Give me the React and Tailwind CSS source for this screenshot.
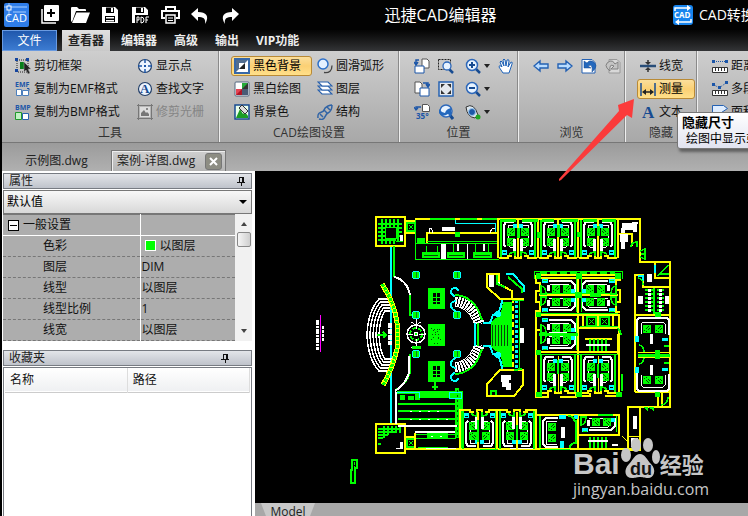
import React from "react";

const BLUE = "#1c56a8";

function Icon({ children, size = 16 }) {
  return (
    <svg width={size} height={size} viewBox="0 0 16 16" fill="none" className="shrink-0" aria-hidden="true">
      {children}
    </svg>
  );
}

/* ---------- quick access icons, 20 x 20, white ---------- */
const quick = [
  ["新建", <g key="n"><path d="M5 1h13v14H5z" fill="#fff" stroke="#fff" strokeWidth="2" strokeLinejoin="round" /><path d="M11 4v8M7 8h8" stroke="#000" strokeWidth="2" /><path d="M2 4v14h14" stroke="#fff" strokeWidth="1.5" /></g>],
  ["打开", <g key="o" fill="#fff"><path d="M1 16V3q0-1 1-1h5l2 2h6q1 0 1 1v1H6L2 17z" /><path d="M6.500 7.500H20L16 18H2z" /></g>],
  ["保存", <g key="s"><path d="M2 2h13l3 3v13H2z" fill="#fff" /><path d="M6 2.500h8V8H6zM5 11h10v6H5z" fill="#000" /><path d="M11 3h2v4h-2zM6 12h8v1.500H6zM6 15h8v1.500H6z" fill="#fff" /></g>],
  ["保存为PDF", <g key="p"><path d="M2 2h13l3 3v5H2zM2 10h3v8H2z" fill="#fff" /><path d="M6 2.500h8V8H6z" fill="#000" /><path d="M11 3h2v4h-2z" fill="#fff" /><path d="M7 18v-6h2v3H7M11 18v-6q3 0 3 3t-3 3M16 18v-6h3M16 15h2" stroke="#fff" /></g>],
  ["打印", <g key="r"><path d="M6 6V2h9v4M5 13H2V6h17v7h-3" stroke="#fff" strokeWidth="2" /><path d="M6 10h9v8H6z" stroke="#fff" strokeWidth="1.500" /><path d="M8 13h5M8 15.500h5" stroke="#fff" /></g>],
  ["撤销", <path key="u" d="M1 9l7-6v4c8 0 12 4 7 12 1-6-2-7-7-7v4z" fill="#fff" />],
  ["重做", <path key="d" d="M19 9l-7-6v4C4 7 0 11 5 19c-1-6 2-7 7-7v4z" fill="#fff" />],
];

function AppLogo() {
  return (
    <svg width="25" height="24" viewBox="0 0 25 24" className="shrink-0" aria-label="CAD">
      <rect width="25" height="24" rx="2" fill="#2f7de8" />
      <path d="M0 4h23M5 0v14M9 9h13" stroke="#a9d0ff" />
      <rect x="3" y="3" width="4" height="4" fill="#2f7de8" stroke="#fff" />
      <text x="1" y="19" fontSize="11" fontFamily="Open Sans, sans-serif" fill="#fff">CAD</text>
    </svg>
  );
}

function ConverterLogo() {
  return (
    <svg width="20" height="20" viewBox="0 0 20 20" className="shrink-0" aria-hidden="true">
      <rect width="20" height="20" rx="3" fill="#1684ee" />
      <path d="M2 6V3h14M18 14v3H4" stroke="#fff" fill="none" strokeWidth="1.500" />
      <path d="M14 0l4 3-4 3zM6 14l-4 3 4 3z" fill="#fff" />
      <text x="1" y="13" fontSize="8" fontWeight="bold" fontFamily="Open Sans, sans-serif" fill="#fff">CAD</text>
    </svg>
  );
}

/* ---------- ribbon icons ---------- */
const magnifier = (
  <g>
    <path d="M10 10l5 5" stroke="#174b91" strokeWidth="2.500" />
    <circle cx="7" cy="7" r="5.500" fill="#e8f3ff" stroke="#2d68ba" strokeWidth="1.500" />
  </g>
);
const pages = (
  <g>
    <path d="M8 1h5l2 2v7H8z" fill="#fff" stroke="#555" />
    <path d="M1 8h9v7H1z" fill="#fff" stroke={BLUE} />
    <path d="M5 2H2v4M0 4l2 3 2-3" stroke={BLUE} strokeWidth="1.500" />
  </g>
);
const ruler = (
  <g>
    <path d="M.5 9.500h15v5H.5z" fill="#fff" stroke="#333" />
    <path d="M3.500 10v3M6.500 10v3M9.500 10v3M12.500 10v3" stroke="#333" />
  </g>
);
const icons = {
  crop: <Icon><path d="M2 2h11v12H2z" stroke="#222" strokeDasharray="1 1" /><path d="M0 0h3v3H0zM11 0h3v3h-3zM0 11h3v3H0z" fill="#1546a0" /><path d="M5 4h4v7H5z" fill="#087f1b" /><path d="M9 4v10l2-2 2 4 2-1-2-4h3z" fill="#222" stroke="#aaa" strokeWidth=".5" /></Icon>,
  emf: <Icon><text x="0" y="6" fontSize="7" fontWeight="bold" fontFamily="Open Sans, sans-serif" fill={BLUE}>EMF</text><path d="M1.500 8.500h5v6h-5zM7.500 9.500h6v5h-6z" fill="#fff" stroke="#4b7fbd" /><path d="M12 7.500h2v2" stroke={BLUE} /></Icon>,
  bmp: <Icon><text x="0" y="6" fontSize="7" fontWeight="bold" fontFamily="Open Sans, sans-serif" fill={BLUE}>BMP</text><path d="M.5 8.500h6v7h-6z" fill="#c1f2c3" stroke="#21982c" /><path d="M7.500 9.500h6v6h-6z" fill="#fff" stroke="#2862ae" /></Icon>,
  point: <Icon><circle cx="8" cy="8" r="6.500" fill="#edf5ff" stroke="#233f68" strokeWidth="1.200" /><path d="M8 1v4M8 11v4M1 8h4M11 8h4" stroke={BLUE} strokeWidth="1.500" /><path d="M7 7h2v2H7z" fill={BLUE} /></Icon>,
  findText: <Icon><circle cx="8" cy="8" r="6.500" fill="#edf5ff" stroke="#233f68" strokeWidth="1.200" /><text x="3" y="12" fontSize="13" fontWeight="bold" fontFamily="Liberation Serif, serif" fill="#174b91">A</text></Icon>,
  raster: <Icon><path d="M1.500 0v16M14.500 0v16M0 1.500h16M0 14.500h16" stroke="#777" /><path d="M3 3h10v10H3z" fill="#ddd" /><path d="M4 12V9l3-3 2 3 1-1 2 2v2z" fill="#777" /><path d="M9 4h2v2H9z" fill="#888" /></Icon>,
  black: <Icon><rect x="1" y="1" width="14" height="14" fill="#fff" stroke="#3768a8" strokeWidth="2" /><path d="M2 2h12L2 14z" fill="#526d8f" /><path d="M5 5h6L5 11z" fill="#fff" /><path d="M11 5v6H5z" fill="#222" /></Icon>,
  mono: <Icon><rect x="1" y="1" width="14" height="14" rx="1" fill="#fff" stroke="#53677f" /><path d="M2 8h6v6H2z" fill="#e54452" /><path d="M8 2h6v6H8z" fill="#333" /><path d="M8 8V2h6z" fill="#25aa38" /><path d="M2 14l6-6v6z" fill="#b01626" /><path d="M8 8h6v6H8z" fill="#4a5b75" /></Icon>,
  color: <Icon><path d="M1 1h14v14H1z" fill="#eaffea" stroke="#174b91" strokeWidth="1.500" /><path d="M2 14l4-9 3 5 2-2 3 4v2z" fill="#1b9d25" /><path d="M5 4l3-3 6 6-3 3z" fill="#ddd" stroke="#333" /></Icon>,
  arc: <Icon><circle cx="6" cy="6" r="5" fill="#e4f0ff" stroke="#2d70c9" strokeWidth="1.500" /><path d="M7 14.500q8 1 8-7" stroke="#444" strokeWidth="1.300" /></Icon>,
  layers: <Icon>{[9, 5, 1].map((y) => <path key={y} d={`M1 ${y}h10l4 4H5z`} fill="#fff" stroke="#2860ac" strokeWidth="1.200" />)}</Icon>,
  dna: <Icon><path d="M1 14C0 6 6 10 7 6s7-5 8-5M2 15c7 2 5-4 9-6s4-5 4-8M3 10l3 3M7 6l4 4M10 3l3 3" stroke="#3164a6" strokeWidth="1.500" /></Icon>,
  pages: <Icon>{pages}</Icon>,
  pagesNext: <Icon><path d="M1 1h5l2 2v9H1z" fill="#fff" stroke="#555" /><path d="M6 7h9v8H6z" fill="#fff" stroke={BLUE} /><path d="M9 2h5v3M12 3l2 3 2-3" stroke={BLUE} strokeWidth="1.500" /></Icon>,
  rotate: <Icon><path d="M8.500.5h5l2 2v5h-7z" fill="#fff" stroke="#555" /><path d="M7 3H2v3M0 3l2 3 2-2" stroke={BLUE} strokeWidth="1.300" /><text x="2" y="15" fontSize="8" fontWeight="bold" fontFamily="Open Sans, sans-serif" fill={BLUE}>35°</text></Icon>,
  region: <Icon><path d="M.5 1.500h12v10H.5z" stroke="#222" strokeDasharray="2 1" /><path d="M11 11l4 4" stroke="#174b91" strokeWidth="2.500" /><circle cx="9" cy="8" r="4" fill="#e8f3ff" stroke="#2d68ba" strokeWidth="1.300" /></Icon>,
  fit: <Icon><path d="M1 1h14v14H1z" fill="#e4e8ed" stroke="#2763b2" strokeWidth="1.500" /><path d="M3 3h4L3 7zM13 3v4L9 3zM13 13H9l4-4zM3 13V9l4 4z" fill="#333" /></Icon>,
  previous: <Icon><path d="M11 10l4 5" stroke="#174b91" strokeWidth="3" /><circle cx="8" cy="7" r="6" fill="#e8f3ff" stroke="#2d68ba" strokeWidth="1.500" /><path d="M7 9q1-4 6-5v9l-3-3q-6 4-9-1V5l3 3z" fill="#2468bd" /></Icon>,
  zoomIn: <Icon>{magnifier}<path d="M7 4v6M4 7h6" stroke="#174b91" strokeWidth="2" /></Icon>,
  zoomOut: <Icon>{magnifier}<path d="M4 7h6" stroke="#174b91" strokeWidth="2" /></Icon>,
  orbit: <Icon><path d="M1 3q8-5 12 8l-3 3Q2 13 1 3z" fill="#dce6ed" stroke="#333" /><circle cx="7" cy="8" r="3.500" fill="#1b58a7" stroke="#9cc7ed" /><circle cx="13" cy="13" r="2.500" fill="#20a622" /></Icon>,
  hand: <Icon><path d="M5 15L1 9q0-2 2-1l1 1-2-5q1-2 2 0l2 4-1-6q1-2 2 0l1 6 1-6q2-1 2 1l-1 6 3-5q2 0 1 2l-3 9z" fill="#fff" stroke="#1e62b8" /></Icon>,
  left: <Icon><path d="M1 8l6-5v3h8v4H7v3z" fill="#b9dcff" stroke="#2461b3" strokeWidth="1.400" /></Icon>,
  right: <Icon><path d="M15 8L9 3v3H1v4h8v3z" fill="#b9dcff" stroke="#2461b3" strokeWidth="1.400" /></Icon>,
  back: <Icon><path d="M1 1.500h10l3 3V15H1z" fill="#fff" stroke="#2461b3" /><path d="M3 3v7h7L7 8q5-3 4 6 8-7 0-11-3-1-5 2z" fill="#2468bd" stroke="#174b91" strokeWidth=".5" /></Icon>,
  forward: <Icon><path d="M4 1.500h8l3 3V15H4z" fill="#d8d8d8" stroke="#999" /><path d="M13 4v7H6l3-3q-5-3-4 5-8-6 0-10 3-1 5 3z" fill="#c4c4c4" stroke="#808080" /></Icon>,
  lineWidth: <Icon><path d="M0 8h16" stroke="#294e79" strokeWidth="2.500" /><path d="M8 2v2M8 14v-2" stroke="#333" strokeWidth="1.500" /><path d="M5 4h6L8 7zM5 12h6L8 9z" fill="#333" /></Icon>,
  measure: <Icon><path d="M1 2v13M15 2v13" stroke="#174b91" strokeWidth="1.500" /><path d="M4 11h8" stroke="#222" strokeWidth="1.500" /><path d="M2 11l4-3v6zM14 11l-4-3v6z" fill="#222" /></Icon>,
  text: <Icon><text x="2" y="14" fontSize="17" fontWeight="bold" fontFamily="Liberation Serif, serif" fill="#174b91">A</text></Icon>,
  distance: <Icon>{ruler}<path d="M2 3.500h12" stroke={BLUE} strokeDasharray="1 1" /><path d="M0 2h3v3H0zM13 2h3v3h-3z" fill={BLUE} /></Icon>,
  polyline: <Icon>{ruler}<path d="M1 3l6 4 7-5" stroke={BLUE} strokeDasharray="1 1" /><path d="M0 2h3v3H0zM6 5h3v3H6zM13 0h3v3h-3z" fill={BLUE} /></Icon>,
  area: <Icon><path d="M.5 1.500h11l4 3-6 4h-9z" fill="#dfedff" stroke="#2461b3" />{ruler}</Icon>,
};

/* ---------- ribbon pieces ---------- */
function Tool({ icon, label, active, disabled, menu }) {
  return (
    <div className="flex h-[23px] items-center">
      <button
        type="button"
        disabled={disabled}
        aria-label={label || icon}
        className={
          "flex h-5 grow items-center gap-[3px] whitespace-nowrap rounded-[3px] border px-[2px] text-xs leading-4 " +
          (active
            ? "border-[#b98a35] bg-gradient-to-b from-[#fbdf9c] via-[#fbd074] to-[#ffe08a] text-black"
            : disabled
              ? "border-transparent text-[#858585]"
              : "border-transparent text-[#111]")
        }
      >
        {icons[icon]}
        {label}
        {menu && <span className="border-x-[3px] border-t-[4px] border-x-transparent border-t-[#222]" />}
      </button>
    </div>
  );
}

function Group({ title, width, children }) {
  return (
    <section className={"flex shrink-0 flex-col border-r border-[#eee] " + width}>
      <div className="flex h-[73px] border-r border-[#8a8a8a] pt-[3px]">{children}</div>
      <h2 className="grow border-r border-[#8a8a8a] text-center text-xs leading-[18px] text-[#333]">{title}</h2>
    </section>
  );
}

/* ---------- drawing ---------- */
const G = "#00ff00";
const Y = "#ffff00";
const C = "#00ffff";

function Pillow({ x, y }) {
  return (
    <g>
      <rect x={x} y={y} width="8" height="8" fill={G} />
      <path d={`M${x + 1} ${y + 6}l5-5M${x + 3} ${y + 7}l4-4`} stroke="#043b04" strokeDasharray="2 1" />
    </g>
  );
}

function Room({ x, y, flip, up }) {
  const t = `translate(${flip ? x + 19 : x} ${up ? y + 39 : y}) scale(${flip ? -1 : 1} ${up ? -1 : 1})`;
  return (
    <g transform={t}>
      <path d="M2 0v38" stroke={G} strokeWidth="2" />
      <path d="M15 3H7L5 6v20l2 2" stroke="#fff" strokeWidth="2" />
      <path d="M14 6H9v20l2 2h3" stroke="#fff" />
      <Pillow x={8} y={9} />
      <Pillow x={8} y={19} />
      <path d="M14 5h4v4h-4zM3 31h5v5H3z" fill={C} />
      <path d="M14 20h3v12h-3z" fill="#fff" />
      <path d="M4 33h3" stroke="#000" />
      <path d="M10 38q0-5 6-5v5" stroke={G} strokeWidth="1.500" />
      <path d="M0 39h9v-2h4M16 37v2h3" stroke={Y} strokeWidth="2" />
    </g>
  );
}

function WideRoom({ x, y, flip, up, w = 38 }) {
  const t = `translate(${flip ? x + w : x} ${up ? y + 17 : y}) scale(${flip ? -1 : 1} ${up ? -1 : 1})`;
  return (
    <g transform={t}>
      <path d={`M9 3h${w - 16}l4 4v8`} stroke="#fff" strokeWidth="2" />
      <path d={`M9 15h${w - 20}l3-2V8l-2-2H10`} stroke="#fff" />
      <Pillow x={12} y={7} />
      <Pillow x={23} y={7} />
      <path d={`M2 1h6v4H2zM${w - 7} 11h4v4h-4z`} fill={C} />
      <path d="M7 7h3v6H7z" fill="#fff" />
      <path d="M1 8q5 1 5 8H1z" stroke={G} strokeWidth="1.500" />
      <path d={`M${w - 2} 1v16M3 2h4`} stroke={G} />
    </g>
  );
}

function Shaft({ x, y, s = 10 }) {
  return (
    <g stroke={G}>
      <rect x={x} y={y} width={s} height={s} strokeWidth="2" />
      <path d={`M${x + 2} ${y + 2}l${s - 4} ${s - 4}M${x + s - 2} ${y + 2}l${4 - s} ${s - 4}`} />
    </g>
  );
}

function CurvedStair({ up }) {
  return (
    <g transform={up ? "translate(0 669) scale(1 -1)" : undefined}>
      <path d="M455 301q18 2 25 23" stroke="#fff" strokeWidth="9" strokeDasharray="2 1" />
      <path d="M455 306q14 2 20 19" stroke="#fff" />
      <path d="M455 295q20 1 27 25M478 323v12" stroke={G} strokeWidth="2" />
      <path d="M475 323v12M455 296q-4-1-4-4t3-4q4 0 4 3M456 311q-4-1-5-5t5-5" stroke={C} strokeWidth="2" />
      <path d="M483 323h7l3-8q8-1 9-15" stroke={C} strokeWidth="2" />
      <path d="M493 320q9-4 10-18h9v33h-21v-13z" fill={G} />
      <circle cx="498" cy="314" r="3" fill={C} />
    </g>
  );
}

function Plaza() {
  return (
    <g>
      <path d="M391 247v176" stroke={C} strokeWidth="2" />
      <path d="M394 246v31M410 295v20h4M410 354v18q-3 12-14 18" stroke={G} strokeWidth="2" />
      <path d="M394 277q13 3 16 18M409 356v17q-4 12-14 18" stroke="#fff" strokeWidth="2" />
      {[0, 3, 6, 9, 12].map((d) => (
        <path key={d} d={`M390 ${299 + d}H${379 + d / 2}Q${368 + d} ${311 + d / 2} ${367 + d} 335Q${368 + d} ${359 - d / 2} ${379 + d / 2} ${371 - d}h10`} stroke="#fff" strokeWidth="1.500" />
      ))}
      <path d="M382 284q13 20 15 39v26q-4 18-14 36" stroke={Y} strokeWidth="5" />
      <path d="M382 284q13 20 15 39v26q-4 18-14 36" stroke={G} strokeWidth="3" strokeDasharray="3 1" />
      <path d="M390 323v22" stroke="#fff" strokeWidth="4" strokeDasharray="5 1" />
      <path d="M377 335h9m-3-3l3 3-3 3" stroke={G} strokeWidth="2" />
      {[[416, 275], [457, 275], [457, 315], [416, 315], [416, 354], [457, 354]].map(([x, y]) => (
        <g key={`${x}-${y}`}>
          <circle cx={x} cy={y} r="4" fill={G} stroke={C} />
          <path d={`M${x} ${y - 3}v6`} stroke="#087a25" />
        </g>
      ))}
      <circle cx="416" cy="334" r="9" stroke="#fff" strokeWidth="1.500" />
      <circle cx="416" cy="334" r="6" stroke={G} strokeWidth="2" strokeDasharray="4 2" />
      <circle cx="416" cy="334" r="2" fill={G} stroke="#fff" />
      <path d="M416 319v10M416 339v9M407 334h6M419 334h6M411 322l5 3 5-3M411 347h10" stroke="#fff" />
      <path d="M412 346h9v3h-9z" fill={G} />
      <path d="M428 288h17v21h-17zM428 324h17v22h-17zM428 361h17v21h-17z" fill={G} />
      {[293, 366].map((y) => (
        <g key={y}>
          <path d={`M433 ${y}h7v11h-7z`} fill="#000" />
          <path d={`M436 ${y}v11M433 ${y + 4}h7M433 ${y + 8}h7`} stroke={G} />
        </g>
      ))}
      <path d="M431 328l5 5 6-6M432 334h9M431 340l5-4 6 5M434 343h5M434 329h4" stroke="#064b06" strokeDasharray="1 2" />
      <path d="M435 382v8M432 387h6" stroke={G} strokeWidth="2" />
      <CurvedStair />
      <CurvedStair up />
      <path d="M492 325v21M495 325v21M498 325v21M501 325v21M504 325v21M507 325v21" stroke="#064a06" />
      <path d="M513 298v73" stroke={Y} strokeWidth="2" strokeDasharray="5 3" />
      <path d="M516 300v70" stroke={C} strokeWidth="3" strokeDasharray="3 2" />
      <path d="M519 300v70M512 300h12" stroke={G} />
      <path d="M520 328h4v15h-4z" fill="#fff" />
      <path d="M487 274h12v10l13 7v8h-12l-13-12zM512 299h12" stroke={Y} strokeWidth="2" />
      <path d="M489 275h5v12h-5zM496 282h4v3h-4z" fill="#fff" />
      <path d="M497 275v9l8 3" stroke={G} strokeWidth="2" />
      <path d="M506 274h7l11 12v6" stroke={C} strokeWidth="2" />
      <path d="M508 277l14 12v4" stroke={G} strokeWidth="2" />
      <path d="M500 370h23v15l-9 11h-27v-12z" stroke={Y} strokeWidth="2" />
      <path d="M501 375h10v5h-2v3h2v7h-5v-3h-4v-5h-1z" fill="#fff" />
      <path d="M491 395v-4h5v4M514 370l8-1" stroke={G} strokeWidth="2" />
    </g>
  );
}

/* The upper stairwell is hatched on all four sides, the lower one only along its top. */
function Stairwell({ y, open }) {
  return (
    <g>
      <path d={`M376 ${y}h29v29h-29z`} stroke={Y} strokeWidth="2" />
      {open ? (
        <path d={`M378 ${y + 5}h22M378 ${y + 8}h18M378 ${y + 11}h10M378 ${y + 14}h5M384 ${y + 2}v12M388 ${y + 2}v9M392 ${y + 2}v7M396 ${y + 2}v7M400 ${y + 2}v7M378 ${y + 20}h3`} stroke={G} strokeWidth="2" />
      ) : (
        <g>
          <path d={`M378 ${y + 7}h24M378 ${y + 11}h24M378 ${y + 15}h24M378 ${y + 19}h24M378 ${y + 23}h18M382 ${y + 2}v25M386 ${y + 2}v25M390 ${y + 2}v25M394 ${y + 2}v25M398 ${y + 2}v22`} stroke={G} strokeWidth="2" />
          <path d={`M385 ${y + 10}h11v11h-11z`} fill="#000" stroke={G} />
        </g>
      )}
      <path d={`M400 ${y + 18}h3v6h-3z`} fill="#fff" />
      <path d={`M396 ${y + 24}h7`} stroke={open ? "#fff" : G} />
    </g>
  );
}

function NorthHall() {
  return (
    <g>
      <path d="M405 221h10M405 233h10M415 219h83v39M427 243v-10h70" stroke={Y} strokeWidth="2" />
      <Shaft x={407} y={223} s={8} />
      <path d="M430 219h25M460 219h17M482 219h15" stroke={G} strokeWidth="2" />
      <path d="M455.500 220v3h40v9" stroke={C} />
      <path d="M442 227h13v4h-13zM441 243h5v16h-5zM457 243h2v8h-2zM467 243h1v16h-1zM483 243h2v8h-2z" fill="#fff" />
      <path d="M415.500 220v39.500h83M415 243.500h82M427 241.500h70M426.500 246v6M437.500 246v6M453.500 244v8M475.500 244v8M488.500 244v8" stroke={G} />
      <path d="M422 252h18v6h-18zM447 252h18v6h-18zM473 252h19v6h-19zM455 232h5v5h-5zM417 238h8v5h-8z" fill={G} />
      <path d="M429 233v-5q4 0 3 5M495 228q-5 0-4 5" stroke="#fff" />
      <path d="M424 255h14M449 255h14M475 255h15" stroke="#064a06" />
    </g>
  );
}

function Terrace() {
  return (
    <g>
      <path d="M397 391h23v3h-23zM420 391h43v7h-43zM459 398h4v12h-4zM455 388h4v50h-4zM427 433h21v5h-21zM400 395h5v5h-5zM408 396h6v4h-6zM415 394h5v6h-5z" fill={G} />
      <path d="M398 404h58M398 411h58M398 419h58" stroke={G} strokeWidth="2" />
      <path d="M414 434h42" stroke={G} />
      <path d="M396 392v32M398 426h60M415 432h40" stroke="#fff" strokeWidth="2" />
      <path d="M410 411h35M410 419h40M431 436h12" stroke="#fff" strokeDasharray="2 7" />
      <path d="M397 392h22v6M449 392h12v6h-12z" stroke={C} />
      <path d="M457 390v48" stroke="#064a06" strokeDasharray="2 3" />
      <Shaft x={407} y={439} s={8} />
      <path d="M405 437h11M405 449h236M415 433v16" stroke={Y} strokeWidth="2" />
      <path d="M416 438h40M418 447h30M480 449h18M540 449h30" stroke={G} />
      <path d="M426 448h30M510 448h26" stroke="#fff" />
    </g>
  );
}

function EastWing() {
  return (
    <g>
      <path d="M618 219h22v43h30v145h-42v43h12v-43M618 234h14v12" stroke={Y} strokeWidth="2" />
      <path d="M622 223h15v9h-4v-2h-8v3h-4zM620 234h8v8h-3v7h-4zM632 222h6v2h-6z" fill="#fff" />
      <path d="M631 247q0-5 6-5v5M640 251l5-2v10l-5-2M641 254h4" stroke={G} strokeWidth="1.500" />
      <path d="M655 263v15h15M635 392V275h8v12h27M635 315h35M635 392h35M658 393v14M662 393v14" stroke={Y} strokeWidth="2" />
      <path d="M655 265v8M638 276h5v5" stroke={C} strokeWidth="2" />
      <path d="M658 276l10-11M659 274h10M638 278q5 0 5 7M661 405q7-1 7-8" stroke={G} strokeWidth="1.500" />
      <path d="M647 274h5v8h-5zM638 296h5v8h-5zM665 296h4v8h-4z" fill="#fff" />
      {[290, 294, 298, 302, 306, 310].map((y) => (
        <path key={y} d={`M645 ${y}h8M657 ${y}h7`} stroke={G} strokeWidth="2" />
      ))}
      <path d="M649 289v24M660 289v24" stroke="#fff" strokeWidth="3" strokeDasharray="3 1" />
      <path d="M654 288v26" stroke={G} strokeWidth="2" />
      <path d="M655 312h6v6h-6z" fill={G} />
      {[false, true].map((up) => (
        <g key={String(up)} transform={up ? "translate(0 709) scale(1 -1)" : undefined}>
          <path d="M637 338v-18l2-2h28l2 2v15" stroke="#fff" strokeWidth="2" />
          <path d="M641 334v-10l2-2h20l2 2v10" stroke="#fff" />
          <Pillow x={643} y={325} />
          <Pillow x={655} y={325} />
          <path d="M650 334h3v10h-3z" fill="#fff" />
          <path d="M635 336h4v6h-4zM662 338h6v3h-6z" fill={C} />
          <path d="M639 345q5 1 5 7M664 346h5" stroke={G} strokeWidth="1.500" />
        </g>
      ))}
      <path d="M638 352h32M638 357h32" stroke={Y} />
      <path d="M638 355h32" stroke={G} strokeWidth="3" />
      <path d="M655 350h5v9h-5zM655 392h5v5h-5zM643 407l5 4v-4l6 4v-4" fill={G} />
      <path d="M633 416h4v13h-4zM631 438h7v9h-7z" fill="#fff" />
      <path d="M628 436h12M622 436l6 6" stroke={Y} />
    </g>
  );
}

function MiddleBlock() {
  return (
    <g>
      <path d="M534 279v-8h88v8" stroke={G} />
      <path d="M540 272h75" stroke={G} strokeWidth="3" strokeDasharray="7 3" />
      <path d="M536 275h84v5h-4v10h4v12h-4v10h4M536 275v8h4v8h-4v11h4v9h-4v86h12v-3M578 276v120M538 315h81v13h-40M619 315v81h-14M536 352h83M579 396h11v-3M560 397h16v-3M537 330h4M618 334v20" stroke={Y} strokeWidth="2" />
      <path d="M539 295h79M539 278h78" stroke={Y} strokeWidth="2" />
      <WideRoom x={540} y={278} />
      <WideRoom x={540} y={296} up />
      <WideRoom x={579} y={278} flip />
      <WideRoom x={579} y={296} flip up />
      <WideRoom x={540} y={317} />
      <WideRoom x={540} y={334} up />
      <path d="M583 316v11M613 316v11M598 316v11M585 339h27" stroke={Y} strokeWidth="2" />
      <Shaft x={587} y={317} s={9} />
      <Shaft x={600} y={317} s={9} />
      {[590, 594, 598, 602, 606].map((x) => <path key={x} d={`M${x} 339v12`} stroke={G} strokeWidth="2" />)}
      <path d="M586 345h24" stroke="#fff" strokeWidth="2" />
      <Room x={539} y={354} />
      <Room x={558} y={354} flip />
      <Room x={579} y={354} />
      <Room x={598} y={354} flip />
      <path d="M558 356v36M598 356v36" stroke={Y} />
      <path d="M618 328q3 4 3 7M622 374v17M558 360v14M598 364v14" stroke={G} strokeWidth="2" />
      <path d="M536 273h5v6h-5zM576 273h6v6h-6zM615 273h6v6h-6zM575 292h7v6h-7zM590 293h11v4h-11zM539 333h39v3h-39zM536 312h5v5h-5zM536 350h5v5h-5zM576 392h6v5h-6zM536 392h6v5h-6zM616 392h6v5h-6z" fill={G} />
      <path d="M539 293h78M540 313h78M580 326h38M539 354h79" stroke={G} />
    </g>
  );
}

function FloorPlan() {
  return (
    <svg className="h-full w-full" viewBox="255 171 493 332" preserveAspectRatio="xMinYMin slice" fill="none" shapeRendering="crispEdges" aria-label="案例-详图">
      <Stairwell y={217} />
      <Stairwell y={424} open />
      <NorthHall />
      <Plaza />
      <Terrace />
      {[499, 518, 539, 558, 579, 598].map((x, i) => <Room key={x} x={x} y={219} flip={i % 2 === 1} />)}
      {[461, 479, 498, 517].map((x, i) => <Room key={x} x={x} y={410} flip={i % 2 === 1} up />)}
      <path d="M498 219h120M518 219v39M538 219v39M558 219v39M578 219v39M598 219v39M618 219v39" stroke={Y} strokeWidth="2" />
      <path d="M500 220h16M522 220h16M542 220h12M561 220h17M583 220h14M602 220h14M518 228v10M538 232v6M558 225v12M578 232v5M598 226v10" stroke={G} strokeWidth="3" />
      <MiddleBlock />
      <EastWing />
      <path d="M460 449v-39h10v2M478 412v37M497 410v39M517 412v37M526 412v-2h10v39M536 415h42v34M578 415h41v20h-41" stroke={Y} strokeWidth="2" />
      <path d="M478 420v22M517 425v15M540 416v32M576 420v24M598 415h15M462 411v37" stroke={G} strokeWidth="2" />
      <path d="M558 418h-12l-3 3v23l3 3h12" stroke="#fff" strokeWidth="2" />
      <path d="M557 421h-11v23h11" stroke="#fff" />
      <Pillow x={548} y={423} />
      <Pillow x={548} y={434} />
      <path d="M561 427h4v11h-4z" fill="#fff" />
      <path d="M559 415h7v4h-7zM560 441h4v7h-4zM574 415h4v4h-4z" fill={C} />
      <path d="M568 416q6 0 7 6M570 448q0-5 6-5" stroke={G} strokeWidth="2" />
      <WideRoom x={580} y={416} up />
      {[590, 594, 598, 602, 606].map((x) => <path key={x} d={`M${x} 437v11`} stroke={G} strokeWidth="2" />)}
      <path d="M588 441h20M612 445h6" stroke="#fff" strokeWidth="2" />
      <path d="M320 315v37" stroke="#f0f" />
      <path d="M317 320v30" stroke="#fff" strokeWidth="3" strokeDasharray="5 1 2 1" />
      <path d="M323 326v15" stroke="#fff" strokeWidth="2" strokeDasharray="3 1" />
      <path d="M352 460h5v8h-2v15h-4v-13h1z" stroke={G} strokeWidth="1.500" />
      <path d="M354 462v18" stroke={G} strokeDasharray="3 1" />
    </svg>
  );
}

function Watermark() {
  return (
    <div className="absolute left-[318px] top-[264px] text-[#c6c6c6]" aria-label="Baidu 经验">
      <div className="flex h-[45px] items-end">
        <span className="font-['Liberation_Sans'] text-[30px] font-bold leading-8">Bai</span>
        <svg width="40" height="44" viewBox="0 0 40 44" fill="currentColor" aria-hidden="true">
          <ellipse cx="6" cy="19" rx="5" ry="7" />
          <ellipse cx="16" cy="9" rx="5" ry="7" />
          <ellipse cx="28" cy="9" rx="5" ry="7" />
          <ellipse cx="36" cy="21" rx="4" ry="7" />
          <path d="M20 18c5 0 7 6 11 10 6 6 3 14-3 14-4 0-5-1-8-1s-4 1-8 1c-7 0-9-8-3-14 4-4 6-10 11-10z" />
          <text x="10" y="39" fontSize="18" fontWeight="bold" fontFamily="Liberation Sans, sans-serif" fill="#111">du</text>
        </svg>
        <span className="text-[22px] font-bold leading-8">经验</span>
      </div>
      <div className="text-base leading-[18px]">jingyan.baidu.com</div>
    </div>
  );
}

/* ---------- side panels ---------- */
function PanelTitle({ title, inset }) {
  return (
    <div className="flex h-4 items-center justify-between border border-[#777b82] bg-gradient-to-b from-[#e3e5e9] to-[#bfc3cb] pl-[5px] text-xs leading-4 text-[#222]">
      <h2>{title}</h2>
      <button type="button" aria-label={"固定" + title} className={inset ? "mr-[22px]" : "mr-[6px]"}>
        <svg width="8" height="10" viewBox="0 0 8 10" fill="none" stroke="#111" shapeRendering="crispEdges" aria-hidden="true">
          <path d="M2 6V1h4v5M5 1v5M0 6h8M4 6v4" />
        </svg>
      </button>
    </div>
  );
}

const properties = [["色彩", "以图层"], ["图层", "DIM"], ["线型", "以图层"], ["线型比例", "1"], ["线宽", "以图层"]];

function SidePanels() {
  return (
    <aside className="flex w-[253px] shrink-0 flex-col bg-white pl-px pr-[3px] pt-[2px] text-xs text-[#111]">
      <PanelTitle title="属性" />
      <div className="relative mt-px">
        <label htmlFor="preset" className="sr-only">属性预设</label>
        <select id="preset" className="block h-6 w-full appearance-none border border-[#777] bg-gradient-to-b from-[#f8f8f8] to-[#d8d8d8] pl-[3px] text-xs text-black">
          <option>默认值</option>
        </select>
        <span className="pointer-events-none absolute right-[5px] top-[10px] border-x-[4px] border-t-[4px] border-x-transparent border-t-black" />
      </div>
      <div className="flex">
        <table className="grow table-fixed border-collapse bg-[#adadad] text-left">
          <thead>
            <tr className="h-[21px] border-b border-t border-b-white border-t-[#777]">
              <th scope="col" className="w-[137px] border-r border-white pl-[5px] font-normal">
                <button type="button" className="flex items-center gap-1">
                  <span className="flex h-[11px] w-[11px] items-center justify-center border border-black bg-white"><span className="h-px w-[7px] bg-black" /></span>
                  一般设置
                </button>
              </th>
              <th scope="col" aria-label="值" />
            </tr>
          </thead>
          <tbody>
            {properties.map(([name, value]) => (
              <tr key={name} className="h-[21px] border-b border-dashed border-[#777]">
                <th scope="row" className="border-r border-solid border-r-white pl-10 font-normal leading-5">{name}</th>
                <td className="pl-px leading-5">
                  {name === "色彩" && <span className="ml-[3px] mr-1 inline-block h-[11px] w-[11px] border border-white bg-[#00ff00] align-[-1px]" />}
                  {value}
                </td>
              </tr>
            ))}
          </tbody>
        </table>
        <div className="flex w-[17px] flex-col items-center bg-[#f1f1f1] py-2">
          <span className="border-x-[3px] border-b-[4px] border-x-transparent border-b-[#444]" />
          <span className="mt-[6px] h-[15px] w-[14px] rounded-[2px] border border-[#888] bg-gradient-to-r from-[#f5f5f5] to-[#cfcfcf]" />
          <span className="mt-auto border-x-[3px] border-t-[4px] border-x-transparent border-t-[#444]" />
        </div>
      </div>
      <div className="h-[9px]" />
      <PanelTitle title="收藏夹" inset />
      <div className="mt-px grow border border-b-0 border-[#777b82] px-px">
        <table className="w-full table-fixed border-collapse text-left">
          <thead>
            <tr className="h-6 border-b border-[#ccc] bg-gradient-to-b from-white to-[#eff0f2]">
              <th scope="col" className="border-r border-[#ddd] pl-[5px] font-normal">名称</th>
              <th scope="col" className="border-r border-[#ddd] pl-[5px] font-normal">路径</th>
            </tr>
          </thead>
        </table>
      </div>
    </aside>
  );
}

export default function App() {
  return (
    <div className="relative flex h-screen w-full flex-col overflow-hidden bg-black pl-[2px] font-['Open_Sans','Noto_Sans_CJK_SC',sans-serif]">
      <header className="flex h-[30px] shrink-0 items-center overflow-hidden bg-[#020202] pl-[2px] text-white">
        <AppLogo />
        <div className="ml-[11px] flex gap-[10px]">
          {quick.map(([label, drawing]) => (
            <button key={label} type="button" aria-label={label}>
              <svg width="20" height="20" viewBox="0 0 20 20" fill="none" aria-hidden="true">{drawing}</svg>
            </button>
          ))}
        </div>
        <h1 className="grow whitespace-nowrap pr-8 text-center text-base leading-6">迅捷CAD编辑器</h1>
        <button type="button" className="flex w-[75px] shrink-0 items-center gap-[6px] overflow-hidden whitespace-nowrap text-sm">
          <ConverterLogo />
          CAD转换器
        </button>
      </header>

      <nav className="flex h-[21px] shrink-0 bg-gradient-to-b from-[#050505] to-[#343537] text-xs font-bold text-[#eee]">
        <button type="button" className="mr-[5px] w-[55px] border border-[#6b9be0] bg-gradient-to-b from-[#2058ad] to-[#3c7bd1] font-normal text-white">文件</button>
        <button type="button" className="mr-[2px] w-12 bg-gradient-to-b from-[#e0e0e0] to-[#c9c9c9] text-[#222]">查看器</button>
        {["编辑器", "高级", "输出", "VIP功能"].map((t) => (
          <button key={t} type="button" className="ml-px px-2">{t}</button>
        ))}
      </nav>

      <div className="flex h-[92px] shrink-0 overflow-hidden border-b border-[#777] bg-gradient-to-b from-[#cecece] to-[#a8a8a8]">
        <Group title="工具" width="w-[218px]">
          <div className="w-[122px] pl-[10px]">
            <Tool icon="crop" label="剪切框架" />
            <Tool icon="emf" label="复制为EMF格式" />
            <Tool icon="bmp" label="复制为BMP格式" />
          </div>
          <div className="pl-[10px]">
            <Tool icon="point" label="显示点" />
            <Tool icon="findText" label="查找文字" />
            <Tool icon="raster" label="修剪光栅" disabled />
          </div>
        </Group>
        <Group title="CAD绘图设置" width="w-[180px]">
          <div className="ml-[11px] w-[81px]">
            <Tool icon="black" label="黑色背景" active />
            <Tool icon="mono" label="黑白绘图" />
            <Tool icon="color" label="背景色" />
          </div>
          <div className="pl-[2px]">
            <Tool icon="arc" label="圆滑弧形" />
            <Tool icon="layers" label="图层" />
            <Tool icon="dna" label="结构" />
          </div>
        </Group>
        <Group title="位置" width="w-[119px]">
          <div className="ml-[11px] w-6">
            <Tool icon="pages" />
            <Tool icon="pagesNext" />
            <Tool icon="rotate" />
          </div>
          <div className="w-[27px]">
            <Tool icon="region" />
            <Tool icon="fit" />
            <Tool icon="previous" />
          </div>
          <div className="w-[33px]">
            <Tool icon="zoomIn" menu />
            <Tool icon="zoomOut" menu />
            <Tool icon="orbit" menu />
          </div>
          <div><Tool icon="hand" /></div>
        </Group>
        <Group title="浏览" width="w-[107px]">
          <div className="ml-[11px] flex gap-[2px]">
            <Tool icon="left" />
            <Tool icon="right" />
            <Tool icon="back" />
            <Tool icon="forward" />
          </div>
        </Group>
        <Group title="隐藏" width="w-[72px]">
          <div className="ml-[11px] w-[58px]">
            <Tool icon="lineWidth" label="线宽" />
            <Tool icon="measure" label="测量" active />
            <Tool icon="text" label="文本" />
          </div>
        </Group>
        <Group title="测量" width="w-[160px]">
          <div className="ml-[11px]">
            <Tool icon="distance" label="距离" />
            <Tool icon="polyline" label="多段线长度" />
            <Tool icon="area" label="面积" />
          </div>
        </Group>
      </div>

      <div className="flex h-7 shrink-0 items-end bg-gradient-to-b from-[#9b9b9b] to-[#b0b0b0] text-xs text-[#222]">
        <button type="button" className="h-[21px] w-[109px] text-center">示例图.dwg</button>
        <div className="flex h-[21px] items-center gap-[10px] border border-b-0 border-[#777] bg-gradient-to-b from-[#cfcfcf] to-[#b5b5b5] pl-[5px] pr-[3px] shadow-[inset_1px_1px_0_#eee]">
          <button type="button">案例-详图.dwg</button>
          <button type="button" aria-label="关闭" className="flex h-[17px] w-[17px] items-center justify-center rounded-[3px] border border-[#777] bg-[#8d8d83]">
            <svg width="9" height="9" viewBox="0 0 9 9" stroke="#fff" strokeWidth="2" aria-hidden="true"><path d="M1 1l7 7M8 1L1 8" /></svg>
          </button>
        </div>
      </div>

      <div className="flex min-h-0 grow">
        <SidePanels />
        <main className="flex min-w-0 grow flex-col bg-black">
          <div className="relative min-h-0 grow overflow-hidden">
            <FloorPlan />
            <Watermark />
          </div>
          <div className="flex h-[13px] shrink-0 overflow-hidden bg-[#a8a8a8] pl-[6px]">
            <button type="button" className="h-[17px] w-[54px] bg-[#c8c8c8] text-xs leading-4 text-[#222] [clip-path:polygon(0_0,100%_0,88%_100%,12%_100%)]">Model</button>
          </div>
        </main>
      </div>

      <div role="tooltip" className="absolute left-[677px] top-[112px] w-[160px] whitespace-nowrap rounded-[3px] border border-[#777] bg-gradient-to-b from-white to-[#e1e3f0] py-px pl-1 text-black shadow-[2px_3px_3px_rgba(0,0,0,0.4)]">
        <strong className="block text-[13px] leading-[17px]">隐藏尺寸</strong>
        <span className="block pl-1 text-xs leading-4">绘图中显示或隐藏尺寸</span>
      </div>
      <svg className="pointer-events-none absolute left-[558px] top-[98px]" width="78" height="84" viewBox="558 98 78 84" aria-hidden="true">
        <path d="M634 99l-16 6 1 6-60 68v2l2-1 66-65 5 3z" fill="#fb3b3b" />
      </svg>
    </div>
  );
}
